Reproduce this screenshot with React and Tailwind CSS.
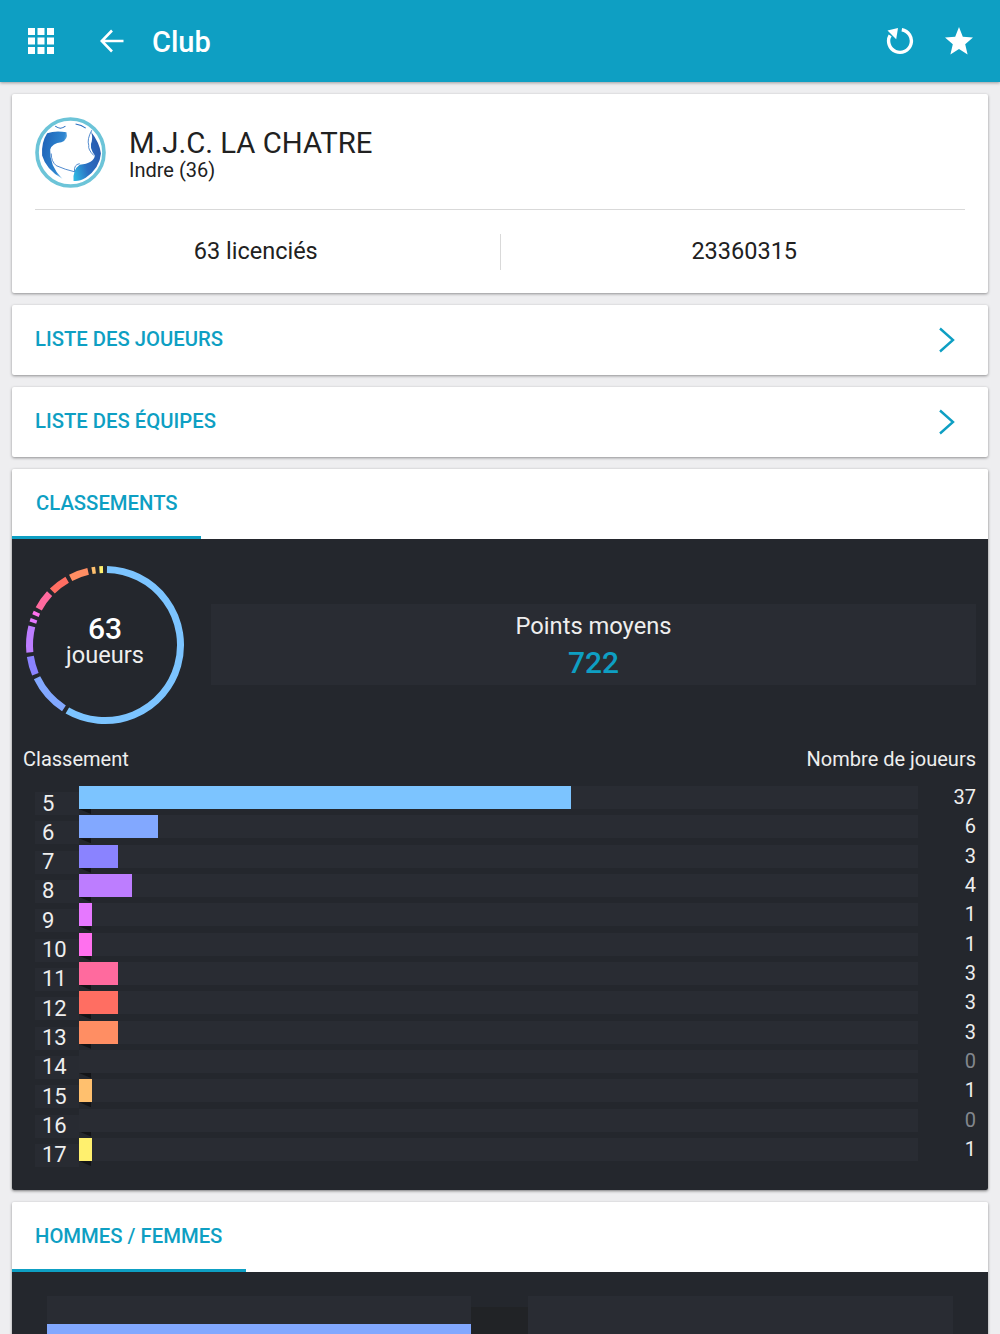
const BLUE = "#0e9fc3";

const rows = [
  { label: "5", n: 37, color: "#7cc4ff" },
  { label: "6", n: 6, color: "#82a8ff" },
  { label: "7", n: 3, color: "#8a83ff" },
  { label: "8", n: 4, color: "#bd7dff" },
  { label: "9", n: 1, color: "#e678ff" },
  { label: "10", n: 1, color: "#ff70ee" },
  { label: "11", n: 3, color: "#ff6a9e" },
  { label: "12", n: 3, color: "#ff6e62" },
  { label: "13", n: 3, color: "#ff8e63" },
  { label: "14", n: 0, color: "#ffa868" },
  { label: "15", n: 1, color: "#ffc06e" },
  { label: "16", n: 0, color: "#ffd86e" },
  { label: "17", n: 1, color: "#fff06e" },
];

function arc(a0, a1, r) {
  const p = (a) => {
    const t = (a * Math.PI) / 180;
    return `${(80 + r * Math.sin(t)).toFixed(2)} ${(80 - r * Math.cos(t)).toFixed(2)}`;
  };
  return `M${p(a0)} A${r} ${r} 0 ${a1 - a0 > 180 ? 1 : 0} 1 ${p(a1)}`;
}

function Ring() {
  let acc = 0;
  return (
    <svg width="160" height="160" viewBox="0 0 160 160" className="shrink-0">
      {rows.map((r) => {
        const start = (acc / 63) * 360;
        acc += r.n;
        const end = (acc / 63) * 360;
        if (!r.n) return null;
        return (
          <path key={r.label} d={arc(start + 1.5, end - 1.5, 75.5)} fill="none" stroke={r.color} strokeWidth="7" />
        );
      })}
    </svg>
  );
}

function Logo() {
  return (
    <svg width="71" height="71" viewBox="0 0 70 70" className="shrink-0">
      <defs>
        <linearGradient id="lg1" x1="0" y1="0" x2="1" y2="0.4">
          <stop offset="0" stopColor="#1c5fb5" />
          <stop offset="0.8" stopColor="#2f86d0" />
          <stop offset="1" stopColor="#8fc9ee" />
        </linearGradient>
        <linearGradient id="lg2" x1="0" y1="1" x2="1" y2="0.5">
          <stop offset="0" stopColor="#2fc0e6" />
          <stop offset="0.5" stopColor="#2a6fc2" />
          <stop offset="1" stopColor="#2a5cb0" />
        </linearGradient>
      </defs>
      <circle cx="35" cy="35" r="33" fill="#fff" stroke="#6cc4d8" strokeWidth="3.6" />
      <path d="M12 16Q20 13 31 15Q33 22 26 25Q17 26 15 32Q14 48 27 61Q11 52 7 38Q6 25 12 16Z" fill="url(#lg1)" />
      <path d="M55 14Q64 26 65 36Q64 50 50 60Q43 64 38 63Q37 52 44 47Q58 46 59 38Q53 30 56 24Q57 18 55 14Z" fill="url(#lg2)" />
      <path d="M16 36Q16 44 21 48Q30 52 39 54Q38 47 44 46" fill="none" stroke="#2a6fc2" strokeWidth="0.8" />
      <path d="M56 13Q51 22 53 28Q52 32 58 38" fill="none" stroke="#2a6fc2" strokeWidth="0.8" />
      <path d="M20 9Q25 13 30 9M40 7Q46 8 50 11" fill="none" stroke="#2a6fc2" strokeWidth="1" />
    </svg>
  );
}

function LinkCard({ children }) {
  return (
    <div className="flex h-[70px] items-center justify-between rounded-[2px] bg-white pl-[23px] pr-[32px] shadow-[0_1px_3px_rgba(0,0,0,0.4)]">
      <span className="-mt-[2px] text-[20.3px] font-medium text-[#0e9fc3]">{children}</span>
      <svg width="18" height="26" viewBox="0 0 18 26" fill="none" stroke={BLUE} strokeWidth="2.4">
        <path d="M2 1.5L15 13L2 24.5" />
      </svg>
    </div>
  );
}

function Tab({ width, children, left }) {
  return (
    <div className="h-[70px] rounded-t-[2px] bg-white">
      <div
        className="flex h-[70px] items-center border-b-[3px] border-[#0e9fc3] pt-[1px] text-[20.3px] font-medium text-[#0e9fc3]"
        style={{ width, paddingLeft: left }}
      >
        {children}
      </div>
    </div>
  );
}

export default function App() {
  return (
    <div className="h-[1334px] w-[1000px] overflow-hidden bg-[#eeeef0] font-[Roboto,sans-serif] text-[#212121]">
      <header className="relative z-10 flex h-[82px] items-center bg-[#0e9fc3] pl-[28px] pr-[26px] shadow-[0_1px_3px_rgba(0,0,0,0.35)]">
        <svg width="26" height="26" viewBox="0 0 26 26" fill="#fff" className="shrink-0">
          {[0, 9.5, 19].flatMap((y) =>
            [0, 9.5, 19].map((x) => <rect key={`${x}-${y}`} x={x} y={y} width="7" height="7" />)
          )}
        </svg>
        <svg width="24" height="24" viewBox="0 0 24 24" fill="none" stroke="#fff" strokeWidth="2.6" className="ml-[46px] shrink-0">
          <path d="M23.5 12H2M12 1.5L1.8 12L12 22.5" />
        </svg>
        <span className="ml-[28px] mt-[2px] text-[29px] font-medium leading-none text-white">Club</span>
        <svg width="28" height="28" viewBox="-14 -14 28 28" fill="none" className="ml-auto shrink-0">
          <path d="M1.8 -11.3A11.4 11.4 0 1 1 -9.9 -5.7" stroke="#fff" strokeWidth="3.4" />
          <path d="M-12.5 -10.5L-2 -13L-3.8 -1.8Z" fill="#fff" />
        </svg>
        <svg width="30" height="28" viewBox="0 0 30 28" fill="#fff" className="ml-[30px] shrink-0">
          <path d="M15 0L18.8 9.8L29 10.6L21.2 17.2L23.6 27.6L15 22L6.4 27.6L8.8 17.2L1 10.6L11.2 9.8Z" />
        </svg>
      </header>

      <main className="flex flex-col gap-3 px-3 pt-3">
        <section className="h-[199px] rounded-[2px] bg-white shadow-[0_1px_3px_rgba(0,0,0,0.4)]">
          <div className="mx-[23px] flex h-[116px] items-start gap-[23px] border-b border-[#d9d9d9] pt-[23px]">
            <Logo />
            <div className="pt-[9px]">
              <div className="text-[29.3px] leading-[34px]">M.J.C. LA CHATRE</div>
              <div className="text-[20px] leading-[21px]">Indre (36)</div>
            </div>
          </div>
          <div className="mt-[24px] flex h-[36px] text-[23.5px]">
            <div className="flex flex-1 items-center justify-center">63 licenciés</div>
            <div className="flex flex-1 items-center justify-center border-l border-[#d9d9d9]">23360315</div>
          </div>
        </section>

        <LinkCard>LISTE DES JOUEURS</LinkCard>
        <LinkCard>LISTE DES ÉQUIPES</LinkCard>

        <section className="rounded-[2px] shadow-[0_1px_3px_rgba(0,0,0,0.5)]">
          <Tab width={189} left={24}>CLASSEMENTS</Tab>
          <div className="h-[651px] rounded-b-[2px] bg-[#24272d] pt-[25px] text-white">
            <div className="flex items-center pl-[13px] pr-3">
              <div className="relative mt-[1px]">
                <Ring />
                <div className="absolute inset-0 flex flex-col items-center justify-center pb-[9px]">
                  <span className="text-[30px] font-medium leading-[29px]">63</span>
                  <span className="text-[23.6px] leading-[25px] text-[#eeeeee]">joueurs</span>
                </div>
              </div>
              <div className="ml-[26px] flex h-[81px] flex-1 flex-col items-center justify-center bg-[#292c33] pt-[6px]">
                <span className="text-[23.7px] leading-[30px] text-[#eeeeee]">Points moyens</span>
                <span className="mt-[1px] text-[30px] font-medium leading-[42px] text-[#0e9fc3]">722</span>
              </div>
            </div>
            <div className="mt-[20px] flex justify-between pl-[11px] pr-3 text-[20px] leading-[28px] text-[#eeeeee]">
              <span>Classement</span>
              <span>Nombre de joueurs</span>
            </div>
            <div className="mt-[13px] flex flex-col pl-[23px] pr-3">
              {rows.map((r) => (
                <div key={r.label} className="flex h-[29.33px] items-start">
                  <div className="mt-[6px] flex h-[23px] w-[44px] shrink-0 items-center bg-[#282b32] pl-[7px] text-[22px] leading-none text-[#eeeeee]">
                    {r.label}
                  </div>
                  <div className="relative h-[23px] w-[839px] shrink-0 bg-[#292c33]">
                    <div
                      className="h-full"
                      style={{ width: Math.floor(r.n * 13.3), backgroundColor: r.color }}
                    />
                    <div className="absolute left-0 top-full h-[5px] w-[12px] bg-[#131417] [clip-path:polygon(0_0,100%_0,100%_100%)]" />
                  </div>
                  <div className={`flex-1 text-right text-[20px] leading-[23px] ${r.n ? "text-[#eeeeee]" : "text-[#83878d]"}`}>
                    {r.n}
                  </div>
                </div>
              ))}
            </div>
          </div>
        </section>

        <section className="rounded-[2px] shadow-[0_1px_3px_rgba(0,0,0,0.4)]">
          <Tab width={234} left={23}>HOMMES / FEMMES</Tab>
          <div className="flex h-[200px] bg-[#24272d] px-[35px] pt-[24px]">
            <div className="h-[200px] w-[424px] bg-[#292c33] pt-[28px]">
              <div className="h-full bg-[#82a8ff]" />
            </div>
            <div className="mt-[11px] h-[200px] w-[58px] bg-[#212326]" />
            <div className="h-[200px] w-[425px] bg-[#292c33]" />
          </div>
        </section>
      </main>
    </div>
  );
}
